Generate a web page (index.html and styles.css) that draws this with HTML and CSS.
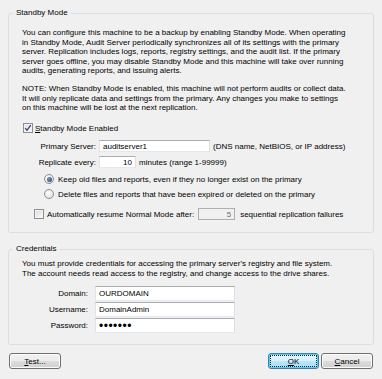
FILE: index.html
```html
<!DOCTYPE html>
<html lang="en">
<head>
    <meta charset="UTF-8">
    <title>Standby Mode</title>
    <link rel="stylesheet" href="styles.css">
</head>
<body>
    <div class="dialog">
        <fieldset class="group">
            <legend>Standby Mode</legend>
            <div class="group-body standby-body">
                <p class="text">You can configure this machine to be a backup by enabling Standby Mode. When operating<br>in Standby Mode, Audit Server periodically synchronizes all of its settings with the primary<br>server. Replication includes logs, reports, registry settings, and the audit list. If the primary<br>server goes offline, you may disable Standby Mode and this machine will take over running<br>audits, generating reports, and issuing alerts.</p>
                <p class="text text-gap">NOTE: When Standby Mode is enabled, this machine will not perform audits or collect data.<br>It will only replicate data and settings from the primary. Any changes you make to settings<br>on this machine will be lost at the next replication.</p>

                <div class="row check-row">
                    <span class="checkbox">
                        <svg width="8" height="8" viewBox="0 0 8 8"><path d="M1.2 4.2 L3 6.3 L6.8 1.2" fill="none" stroke="#2b3f73" stroke-width="1.3"/></svg>
                    </span>
                    <span><u>S</u>tandby Mode Enabled</span>
                </div>

                <div class="row field-row row-primary">
                    <span class="field-label">Primary Server:</span>
                    <input class="textbox server-box" type="text" value="auditserver1">
                    <span>(DNS name, NetBIOS, or IP address)</span>
                </div>

                <div class="row field-row row-replicate">
                    <span class="field-label">Replicate every:</span>
                    <input class="textbox num-box" type="text" value="10">
                    <span>minutes (range 1-99999)</span>
                </div>

                <div class="row radio-row row-keep">
                    <span class="radio checked"></span>
                    <span>Keep old files and reports, even if they no longer exist on the primary</span>
                </div>
                <div class="row radio-row row-delete">
                    <span class="radio"></span>
                    <span>Delete files and reports that have been expired or deleted on the primary</span>
                </div>

                <div class="row resume-row">
                    <span class="checkbox"></span>
                    <span>Automatically resume Normal Mode after:</span>
                    <input class="textbox num-box disabled" type="text" value="5" disabled>
                    <span>sequential replication failures</span>
                </div>
            </div>
        </fieldset>

        <fieldset class="group group-creds">
            <legend>Credentials</legend>
            <div class="group-body creds-body">
                <p class="text text-creds">You must provide credentials for accessing the primary server's registry and file system.<br>The account needs read access to the registry, and change access to the drive shares.</p>

                <div class="cred-list">
                    <div class="cred-row">
                        <span class="cred-label">Domain:</span>
                        <input class="textbox cred-box" type="text" value="OURDOMAIN">
                    </div>
                    <div class="cred-row">
                        <span class="cred-label">Username:</span>
                        <input class="textbox cred-box" type="text" value="DomainAdmin">
                    </div>
                    <div class="cred-row">
                        <span class="cred-label">Password:</span>
                        <input class="textbox cred-box password" type="password" value="secret1">
                    </div>
                </div>
            </div>
        </fieldset>

        <div class="footer">
            <button class="btn"><u>T</u>est...</button>
            <div class="footer-right">
                <button class="btn btn-default"><u>O</u>K</button>
                <button class="btn"><u>C</u>ancel</button>
            </div>
        </div>
    </div>
</body>
</html>
```

FILE: styles.css
```css
* {
    box-sizing: border-box;
}

body {
    margin: 0;
    background: #f0f0f0;
    font-family: 'Liberation Sans', Arial, sans-serif;
    font-size: 8px;
    color: #000;
}

.dialog {
    width: 382px;
    height: 379px;
    padding: 8px 8px 0 8px;
}

/* group boxes */
.group {
    margin: 0;
    padding: 0;
    min-inline-size: 0;
    border: 1px solid #d5dfe5;
    border-radius: 3px;
}

.group legend {
    margin-left: 4px;
    padding: 0 3px;
    line-height: 10px;
}

.group-creds {
    margin-top: 11px;
}

.standby-body {
    padding: 10px 0 12px 13px;
}

.creds-body {
    padding: 5px 0 11px 13px;
}

.text {
    margin: 0;
    line-height: 9.5px;
    white-space: nowrap;
}

.text-gap {
    margin-top: 8.5px;
}

.text-creds {
    line-height: 10px;
}

/* rows */
.row {
    display: flex;
    align-items: center;
    height: 12px;
    white-space: nowrap;
}

.check-row {
    margin-top: 9.5px;
    padding-left: 1px;
    gap: 2px;
}

.row-primary {
    margin-top: 6px;
}

.row-replicate {
    margin-top: 4px;
}

.field-row {
    gap: 3px;
}

.field-label {
    width: 74px;
    text-align: right;
}

.radio-row {
    padding-left: 22px;
    gap: 4px;
}

.row-keep {
    margin-top: 5px;
}

.row-delete {
    margin-top: 3px;
}

.resume-row {
    margin-top: 8px;
    padding-left: 12px;
    gap: 3px;
}

.resume-row .num-box {
    margin: 0 2px 0 1px;
}

/* controls */
.checkbox {
    display: inline-flex;
    align-items: center;
    justify-content: center;
    width: 10px;
    height: 10px;
    border: 1px solid #8e8f8f;
    background: linear-gradient(135deg, #dcdcdc, #fbfbfb);
    box-shadow: inset 0 0 0 1px #f4f4f4;
}

.radio {
    position: relative;
    width: 10px;
    height: 10px;
    border: 1px solid #8e8f8f;
    border-radius: 50%;
    background: radial-gradient(circle at 40% 40%, #ffffff, #d8d8d8);
}

.radio.checked::after {
    content: '';
    position: absolute;
    left: 1.5px;
    top: 1.5px;
    width: 5px;
    height: 5px;
    border-radius: 50%;
    background: radial-gradient(circle at 35% 35%, #6f98c8, #1c3f70);
}

.textbox {
    margin: 0;
    padding: 0 3px;
    height: 12px;
    font-family: inherit;
    font-size: 8px;
    color: #000;
    background: #fff;
    border: 1px solid;
    border-color: #abadb3 #dbdfe6 #e3e9ef #e2e3ea;
    outline: none;
}

.server-box {
    width: 111px;
}

.num-box {
    width: 37px;
    text-align: right;
}

.textbox.disabled {
    background: #f0f0f0;
    border-color: #afafaf;
    color: #6d6d6d;
}

/* credentials */
.cred-list {
    display: flex;
    flex-direction: column;
    gap: 1px;
    margin-top: 7px;
}

.cred-row {
    display: flex;
    align-items: center;
    gap: 7px;
}

.cred-label {
    width: 66px;
    text-align: right;
}

.cred-box {
    width: 140px;
    height: 15px;
}

.cred-box.password {
    font-size: 12px;
    letter-spacing: 0.5px;
}

/* buttons */
.footer {
    display: flex;
    justify-content: space-between;
    margin-top: 8px;
    padding: 0 1px;
}

.footer-right {
    display: flex;
    gap: 2px;
}

.btn {
    width: 52px;
    height: 16px;
    padding: 0;
    font-family: inherit;
    font-size: 8px;
    color: #000;
    border: 1px solid #707070;
    border-radius: 3px;
    background: linear-gradient(#f2f2f2 0%, #ebebeb 50%, #dddddd 50%, #cfcfcf 100%);
    box-shadow: inset 0 0 0 1px #fcfcfc;
}

.btn-default {
    width: 51px;
    border-color: #3c7fb1;
    background: linear-gradient(#eaf6fd 0%, #d9f0fc 50%, #bee6fd 50%, #a7d9f5 100%);
    box-shadow: inset 0 0 0 1px #48d3f8;
    outline: 1px dotted #222;
    outline-offset: -3px;
}
```
